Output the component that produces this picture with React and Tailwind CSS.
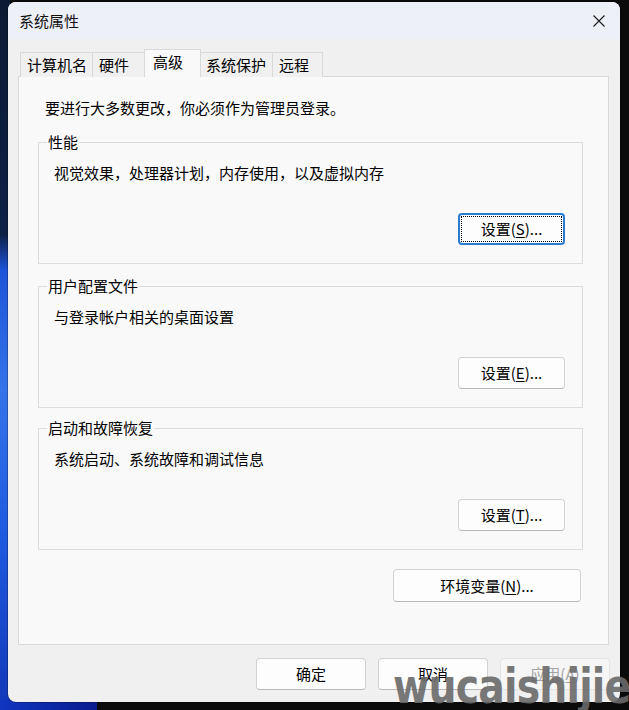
import React from 'react';

const tabs = [
  { label: '计算机名', cls: 'w-[72px] border-l pl-[6px]' },
  { label: '硬件', cls: 'w-[52px] border-l pl-[6px]' },
  { label: '高级', cls: 'w-[57px] border-l border-r pl-[8px]', active: true },
  { label: '系统保护', cls: 'w-[71px] pl-[5px]' },
  { label: '远程', cls: 'w-[51px] border-l border-r pl-[6px]' },
];

const groups = [
  { title: '性能', desc: '视觉效果，处理器计划，内存使用，以及虚拟内存', key: 'S', focused: true, mt: 'mt-[14px]' },
  { title: '用户配置文件', desc: '与登录帐户相关的桌面设置', key: 'E', mt: 'mt-[12px]' },
  { title: '启动和故障恢复', desc: '系统启动、系统故障和调试信息', key: 'T', mt: 'mt-[10px]' },
];

function WinButton({ children, className = '', focused, disabled }) {
  if (focused) {
    return (
      <button className={`relative flex items-center justify-center rounded-[4px] border-2 border-[#2b7bd0] bg-[#fdfdfd] text-[15px] leading-[20px] text-black ${className}`}>
        <span className="absolute inset-[1px] border border-dotted border-black" />
        {children}
      </button>
    );
  }
  return (
    <button
      className={`flex items-center justify-center rounded-[4px] border text-[15px] leading-[20px] ${
        disabled
          ? 'border-[#e3e3e3] bg-[#f6f6f6] text-[#a3a3a3]'
          : 'border-[#d2d2d2] border-b-[#b8b8b8] bg-[#fdfdfd] text-black'
      } ${className}`}
    >
      {children}
    </button>
  );
}

function Group({ title, desc, keyChar, focused, mt }) {
  return (
    <fieldset className={`ml-[19px] w-[545px] border border-[#dddddd] pb-[18px] ${mt}`}>
      <legend className="ml-[8px] px-[1px] text-[15px] leading-[20px] text-black">{title}</legend>
      <p className="mt-[11px] pl-[15px] text-[15px] leading-[20px] text-black">{desc}</p>
      <div className="mt-[30px] flex justify-end pr-[17px]">
        <WinButton focused={focused} className="h-[32px] w-[107px]">
          设置(<span className="underline underline-offset-2">{keyChar}</span>)...
        </WinButton>
      </div>
    </fieldset>
  );
}

export default function App() {
  return (
    <div className="relative h-[710px] w-[629px] overflow-hidden bg-[#0b0b0c] font-['Noto_Sans_CJK_SC','Noto_Sans',sans-serif]">
      {/* desktop wallpaper peeking out */}
      <div className="absolute left-0 top-0 h-full w-[10px] bg-[linear-gradient(180deg,#0c1a34_0%,#0e2046_33%,#1d54d8_38%,#3673ea_55%,#1f5ae0_75%,#1238b8_100%)]" />
      <div className="absolute bottom-0 left-0 h-[10px] w-[97px] bg-[linear-gradient(90deg,#1035c0,#0a1c8e)]" />

      <div className="relative ml-[8px] mt-[2px] flex h-[700px] w-[612px] flex-col overflow-hidden rounded-[8px] bg-[#f0f0f0] shadow-[0_0_0_1px_rgba(0,0,0,0.25)]">
        {/* title bar */}
        <div className="flex h-[37px] shrink-0 items-center justify-between bg-[#eef0f7] pl-[11px] pr-[15px]">
          <span className="text-[15px] leading-[20px] text-[#111]">系统属性</span>
          <svg width="12" height="12" viewBox="0 0 12 12" className="text-[#1a1a1a]">
            <path d="M0.5 0.5L11.5 11.5M11.5 0.5L0.5 11.5" stroke="currentColor" strokeWidth="1.1" fill="none" />
          </svg>
        </div>

        {/* tabs */}
        <div className="relative z-10 -mb-px ml-[12px] mt-[10px] flex h-[28px] items-end">
          {tabs.map((t) =>
            t.active ? (
              <div
                key={t.label}
                className={`flex h-[28px] items-center border-t border-[#d9d9d9] bg-[#f9f9f9] pb-[3px] text-[15px] leading-[20px] text-black ${t.cls}`}
              >
                {t.label}
              </div>
            ) : (
              <div
                key={t.label}
                className={`flex h-[25px] items-center border-t border-[#d9d9d9] bg-[#f0f0f0] pb-[1px] text-[15px] leading-[20px] text-black ${t.cls}`}
              >
                {t.label}
              </div>
            )
          )}
        </div>

        {/* tab page */}
        <div className="ml-[10px] h-[569px] w-[591px] shrink-0 border border-[#d9d9d9] bg-[#f9f9f9] pt-[21px]">
          <p className="pl-[26px] text-[15px] leading-[20px] text-black">要进行大多数更改，你必须作为管理员登录。</p>
          {groups.map((g) => (
            <Group key={g.title} title={g.title} desc={g.desc} keyChar={g.key} focused={g.focused} mt={g.mt} />
          ))}
          <div className="ml-[19px] mt-[19px] flex w-[545px] justify-end pr-[2px]">
            <WinButton className="h-[33px] w-[188px]">
              环境变量(<span className="underline underline-offset-2">N</span>)...
            </WinButton>
          </div>
        </div>

        {/* dialog buttons */}
        <div className="mt-[13px] flex justify-end gap-[12px] pr-[10px]">
          <WinButton className="h-[32px] w-[110px]">确定</WinButton>
          <WinButton className="h-[32px] w-[110px]">取消</WinButton>
          <WinButton disabled className="h-[32px] w-[110px]">
            应用(<span className="underline underline-offset-2">A</span>)
          </WinButton>
        </div>
      </div>

      {/* watermark */}
      <div className="pointer-events-none absolute left-[393px] top-[662px] origin-left scale-x-[0.82] whitespace-nowrap font-['DejaVu_Sans',sans-serif] text-[48px] font-bold leading-[48px] tracking-[-1px] text-[#6a6a6a] opacity-90">
        wucaishijie
      </div>
    </div>
  );
}
